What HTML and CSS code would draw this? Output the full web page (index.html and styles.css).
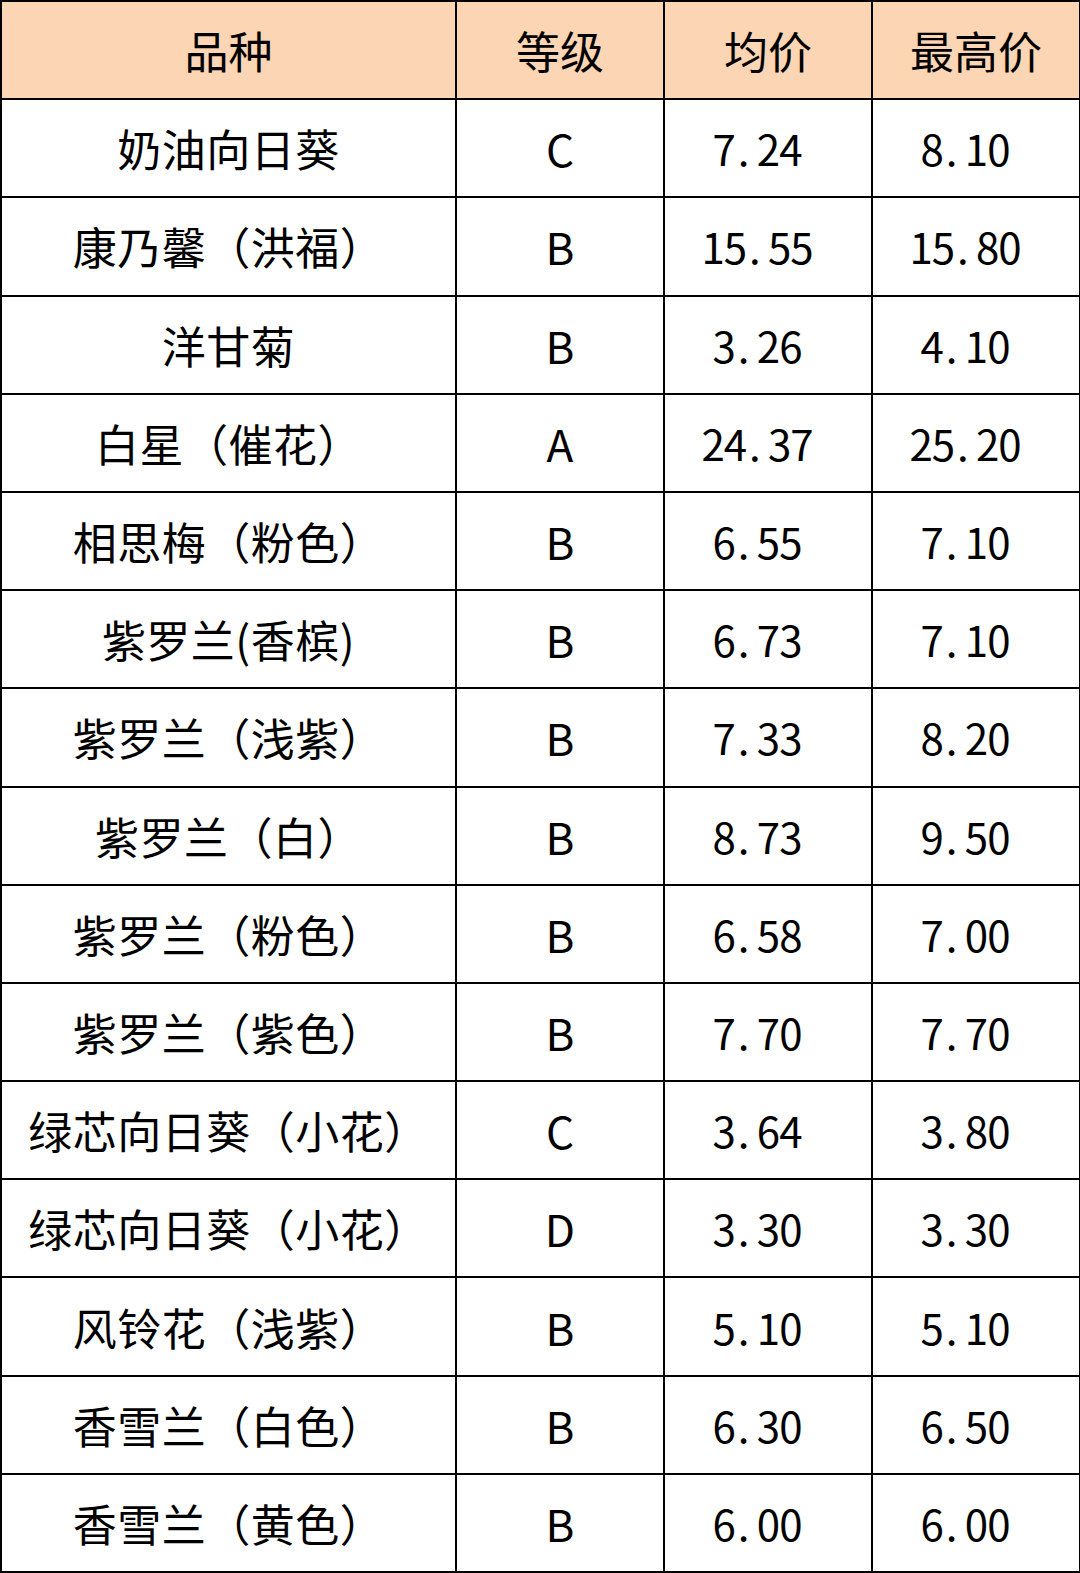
FILE: index.html
```html
<!DOCTYPE html>
<html lang="zh-CN">
<head>
<meta charset="utf-8">
<title>花卉价格表</title>
<link rel="stylesheet" href="styles.css">
</head>
<body>
<table class="price-table">
  <colgroup>
    <col class="col-name">
    <col class="col-grade">
    <col class="col-avg">
    <col class="col-max">
  </colgroup>
  <thead>
    <tr class="head-row">
      <th>品种</th>
      <th>等级</th>
      <th>均价</th>
      <th>最高价</th>
    </tr>
  </thead>
  <tbody>
    <tr><td class="name">奶油向日葵</td><td class="grade">C</td><td class="num">7<span class="dot">.</span>24</td><td class="num">8<span class="dot">.</span>10</td></tr>
    <tr><td class="name">康乃馨（洪福）</td><td class="grade">B</td><td class="num">15<span class="dot">.</span>55</td><td class="num">15<span class="dot">.</span>80</td></tr>
    <tr><td class="name">洋甘菊</td><td class="grade">B</td><td class="num">3<span class="dot">.</span>26</td><td class="num">4<span class="dot">.</span>10</td></tr>
    <tr><td class="name">白星（催花）</td><td class="grade">A</td><td class="num">24<span class="dot">.</span>37</td><td class="num">25<span class="dot">.</span>20</td></tr>
    <tr><td class="name">相思梅（粉色）</td><td class="grade">B</td><td class="num">6<span class="dot">.</span>55</td><td class="num">7<span class="dot">.</span>10</td></tr>
    <tr><td class="name">紫罗兰(香槟)</td><td class="grade">B</td><td class="num">6<span class="dot">.</span>73</td><td class="num">7<span class="dot">.</span>10</td></tr>
    <tr><td class="name">紫罗兰（浅紫）</td><td class="grade">B</td><td class="num">7<span class="dot">.</span>33</td><td class="num">8<span class="dot">.</span>20</td></tr>
    <tr><td class="name">紫罗兰（白）</td><td class="grade">B</td><td class="num">8<span class="dot">.</span>73</td><td class="num">9<span class="dot">.</span>50</td></tr>
    <tr><td class="name">紫罗兰（粉色）</td><td class="grade">B</td><td class="num">6<span class="dot">.</span>58</td><td class="num">7<span class="dot">.</span>00</td></tr>
    <tr><td class="name">紫罗兰（紫色）</td><td class="grade">B</td><td class="num">7<span class="dot">.</span>70</td><td class="num">7<span class="dot">.</span>70</td></tr>
    <tr><td class="name">绿芯向日葵（小花）</td><td class="grade">C</td><td class="num">3<span class="dot">.</span>64</td><td class="num">3<span class="dot">.</span>80</td></tr>
    <tr><td class="name">绿芯向日葵（小花）</td><td class="grade">D</td><td class="num">3<span class="dot">.</span>30</td><td class="num">3<span class="dot">.</span>30</td></tr>
    <tr><td class="name">风铃花（浅紫）</td><td class="grade">B</td><td class="num">5<span class="dot">.</span>10</td><td class="num">5<span class="dot">.</span>10</td></tr>
    <tr><td class="name">香雪兰（白色）</td><td class="grade">B</td><td class="num">6<span class="dot">.</span>30</td><td class="num">6<span class="dot">.</span>50</td></tr>
    <tr><td class="name">香雪兰（黄色）</td><td class="grade">B</td><td class="num">6<span class="dot">.</span>00</td><td class="num">6<span class="dot">.</span>00</td></tr>
  </tbody>
</table>
</body>
</html>
```
FILE: styles.css
```css
html, body {
  margin: 0;
  padding: 0;
  background: #ffffff;
}

body {
  font-family: "Noto Sans CJK SC", "Noto Sans", sans-serif;
  color: #000000;
}

.price-table {
  width: 1079px;
  table-layout: fixed;
  border-collapse: collapse;
}

.col-name { width: 455px; }
.col-grade { width: 208px; }
.col-avg { width: 208px; }
.col-max { width: 208px; }

.price-table th,
.price-table td {
  border: 2px solid #000000;
  height: 96.2px;
  padding: 0;
  text-align: center;
  vertical-align: middle;
  font-size: 44px;
  font-weight: 400;
  line-height: 1;
  white-space: nowrap;
}

.head-row th {
  background: #fcd5b4;
}

.name {
  letter-spacing: 0.5px;
}

.grade {
  font-size: 42px;
}

.price-table .num {
  font-size: 42px;
  letter-spacing: -1px;
  padding-right: 22px;
}

.dot {
  display: inline-block;
  width: 22px;
  text-align: left;
  padding-left: 3px;
  box-sizing: border-box;
}
```
